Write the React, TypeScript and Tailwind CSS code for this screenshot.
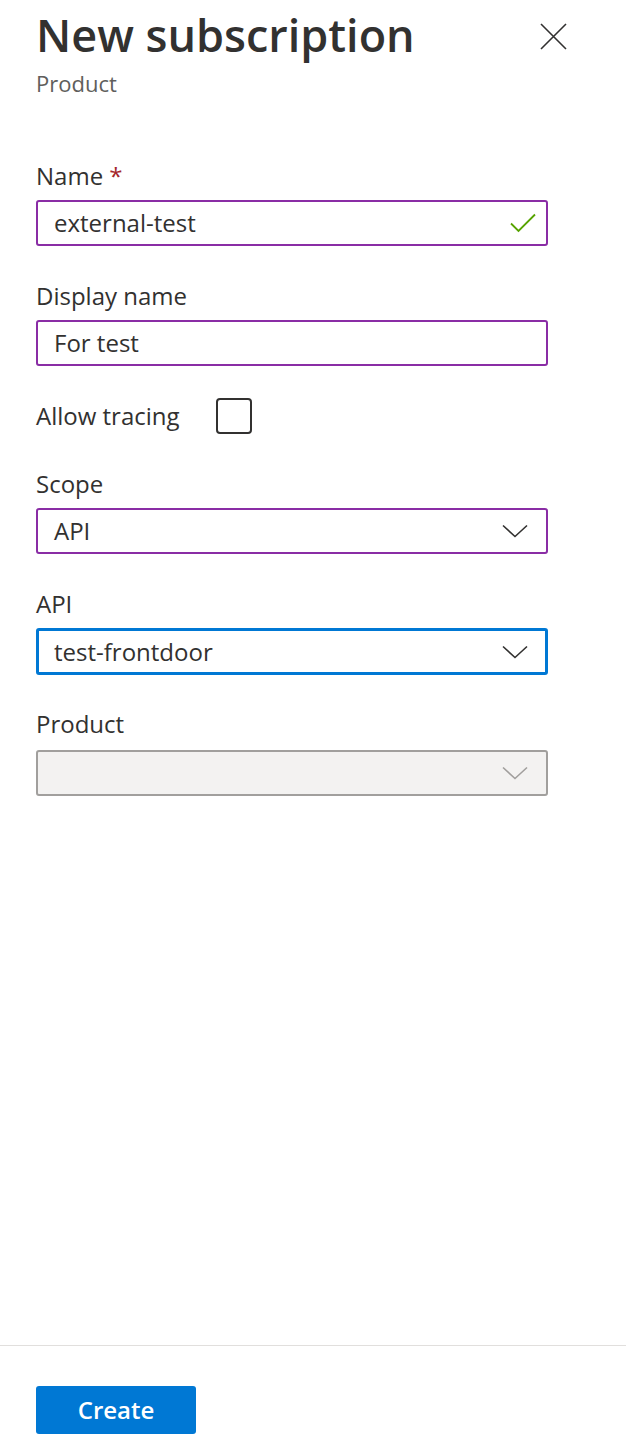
import React from "react";

const font = { fontFamily: '"Open Sans", "Noto Sans", Arial, sans-serif' };

function Chevron({ color = "#323130" }: { color?: string }) {
  return (
    <svg width="26" height="14" viewBox="0 0 26 14" fill="none">
      <path d="M1 1.5 L13 12.5 L25 1.5" stroke={color} strokeWidth="1.6" />
    </svg>
  );
}

function Label({ children }: { children: React.ReactNode }) {
  return <div className="text-[24px] leading-[32px] text-[#323130]">{children}</div>;
}

export default function App() {
  return (
    <div className="h-[1456px] w-[626px] bg-white flex flex-col text-[#323130]" style={font}>
      <div className="flex-1 pl-[36px]">
        <div className="flex items-start justify-between pr-[59px]">
          <div>
            <h1 className="mt-[9px] text-[45px] leading-[52px] font-semibold text-[#323130]">New subscription</h1>
            <div className="mt-[7px] text-[22px] leading-[30px] text-[#605e5c]">Product</div>
          </div>
          <svg className="mt-[23px]" width="27" height="27" viewBox="0 0 27 27" fill="none">
            <path d="M1 1 L26 26 M26 1 L1 26" stroke="#323130" strokeWidth="1.6" />
          </svg>
        </div>

        <div className="w-[512px]">
          <div className="mt-[62px]">
            <Label>
              Name <span className="text-[#a4262c]">*</span>
            </Label>
            <div className="mt-2 h-[46px] border-2 border-[#8a2da5] rounded-[3px] flex items-center justify-between pl-[16px] pr-[10px]">
              <span className="text-[24px]">external-test</span>
              <svg width="26" height="20" viewBox="0 0 26 20" fill="none">
                <path d="M1 10.5 L8.5 18 L25 1.5" stroke="#57a300" strokeWidth="1.8" />
              </svg>
            </div>
          </div>

          <div className="mt-[34px]">
            <Label>Display name</Label>
            <div className="mt-2 h-[46px] border-2 border-[#8a2da5] rounded-[3px] flex items-center pl-[16px]">
              <span className="text-[24px]">For test</span>
            </div>
          </div>

          <div className="mt-[32px] flex items-center h-[36px]">
            <span className="text-[24px] leading-[32px]">Allow tracing</span>
            <div className="ml-[36px] w-[36px] h-[36px] border-2 border-[#323130] rounded-[4px] bg-white" />
          </div>

          <div className="mt-[34px]">
            <Label>Scope</Label>
            <div className="mt-2 h-[46px] border-2 border-[#8a2da5] rounded-[3px] flex items-center justify-between pl-[16px] pr-[18px]">
              <span className="text-[24px]">API</span>
              <Chevron />
            </div>
          </div>

          <div className="mt-[34px]">
            <Label>API</Label>
            <div className="mt-2 h-[47px] border-[3px] border-[#0078d4] rounded-[3px] flex items-center justify-between pl-[15px] pr-[17px]">
              <span className="text-[24px]">test-frontdoor</span>
              <Chevron />
            </div>
          </div>

          <div className="mt-[33px]">
            <Label>Product</Label>
            <div className="mt-[10px] h-[46px] border-2 border-[#a19f9d] bg-[#f3f2f1] rounded-[3px] flex items-center justify-end pr-[18px]">
              <Chevron color="#a19f9d" />
            </div>
          </div>
        </div>
      </div>

      <div className="h-[111px] border-t border-[#e1dfdd] pl-[36px] pt-[40px]">
        <button className="w-[160px] h-[48px] bg-[#0078d4] rounded-[3px] text-white text-[24px] font-semibold flex items-center justify-center">
          Create
        </button>
      </div>
    </div>
  );
}
